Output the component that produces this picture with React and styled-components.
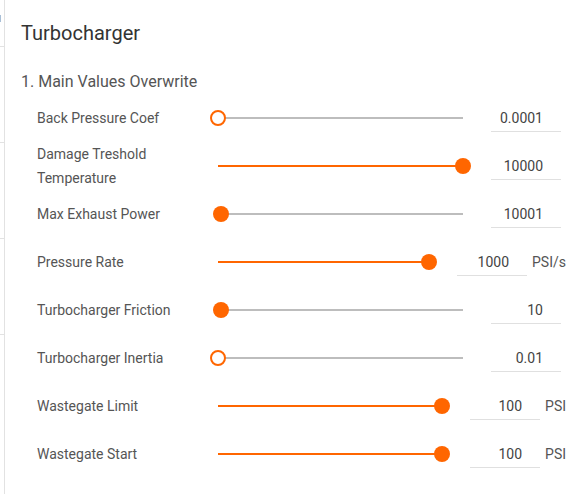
import React from "react";
import styled, { createGlobalStyle } from "styled-components";

const GlobalStyle = createGlobalStyle`
  html, body { margin: 0; padding: 0; background: #ffffff; }
  body { font-family: Roboto, "Liberation Sans", Arial, sans-serif; }
  * { box-sizing: border-box; }
`;

const ORANGE = "#ff6600";

const Page = styled.div`
  display: flex;
  width: 588px;
  height: 494px;
  overflow: hidden;
  background: #fff;
`;

const Strip = styled.div`
  width: 5px;
  flex: none;
  border-right: 1px solid #e2e2e2;
  display: flex;
  flex-direction: column;
`;

const StripCell = styled.div`
  height: ${(p) => p.$h}px;
  flex: none;
  border-bottom: 1px solid #e2e2e2;
  display: flex;
  flex-direction: column;
  padding-top: ${(p) => (p.$mark ? 15 : 0)}px;
`;

const StripMark = styled.div`
  width: 1px;
  height: 7px;
  background: #a9bfd6;
`;

const Panel = styled.div`
  flex: 1;
  min-width: 0;
  padding: 21px 22px 0 16px;
  display: flex;
  flex-direction: column;
`;

const Title = styled.h2`
  margin: 0;
  font-size: 20px;
  line-height: 24px;
  font-weight: 400;
  color: #333;
`;

const SectionTitle = styled.h3`
  margin: 25px 0 0;
  font-size: 16px;
  line-height: 24px;
  font-weight: 400;
  color: #555;
`;

const Rows = styled.div`
  display: flex;
  flex-direction: column;
  padding-left: 16px;
`;

const Row = styled.div`
  display: flex;
  align-items: center;
  min-height: 48px;
`;

const Label = styled.div`
  width: 173px;
  flex: none;
  font-size: 14px;
  line-height: 24px;
  color: #555;
`;

const SliderBox = styled.div`
  flex: 1;
  min-width: 0;
  padding: 0 8px;
  margin-right: 20px;
  height: 20px;
  display: flex;
  align-items: center;
`;

const Track = styled.div`
  position: relative;
  width: 100%;
  height: 2px;
  background: #bdbdbd;
`;

const Fill = styled.div`
  position: absolute;
  left: 0;
  top: 0;
  height: 2px;
  background: ${ORANGE};
`;

const Thumb = styled.div`
  position: absolute;
  top: 1px;
  width: 16px;
  height: 16px;
  margin-left: -8px;
  margin-top: -8px;
  border-radius: 50%;
  background: ${(p) => (p.$empty ? "#fff" : ORANGE)};
  border: ${(p) => (p.$empty ? `2px solid ${ORANGE}` : "none")};
`;

const ValueGroup = styled.div`
  display: flex;
  align-items: center;
  flex: none;
  padding-right: ${(p) => (p.$unit ? 0 : 5)}px;
`;

const ValueInput = styled.input`
  width: 70px;
  height: 28px;
  border: none;
  border-bottom: 1px solid #e0e0e0;
  padding: 0 18px 0 0;
  margin: 0;
  background: transparent;
  text-align: right;
  font-family: Roboto, "Liberation Sans", Arial, sans-serif;
  font-size: 14px;
  color: #444;
  outline: none;
`;

const Unit = styled.span`
  margin-left: 5px;
  font-size: 14px;
  line-height: 24px;
  color: #555;
`;

const rows = [
  { label: "Back Pressure Coef", value: "0.0001", pos: 0 },
  { label: "Damage Treshold Temperature", value: "10000", pos: 1 },
  { label: "Max Exhaust Power", value: "10001", pos: 0.012 },
  { label: "Pressure Rate", value: "1000", pos: 1, unit: "PSI/s" },
  { label: "Turbocharger Friction", value: "10", pos: 0.012 },
  { label: "Turbocharger Inertia", value: "0.01", pos: 0 },
  { label: "Wastegate Limit", value: "100", pos: 1, unit: "PSI" },
  { label: "Wastegate Start", value: "100", pos: 1, unit: "PSI" },
];

function Slider({ pos }) {
  const pct = `${pos * 100}%`;
  return (
    <SliderBox>
      <Track>
        <Fill style={{ width: pct }} />
        <Thumb $empty={pos === 0} style={{ left: pct }} />
      </Track>
    </SliderBox>
  );
}

export default function App() {
  return (
    <>
      <GlobalStyle />
      <Page>
        <Strip>
          <StripCell $h={47} $mark>
            <StripMark />
          </StripCell>
          <StripCell $h={96} />
          <StripCell $h={96} />
          <StripCell $h={96} />
        </Strip>
        <Panel>
          <Title>Turbocharger</Title>
          <SectionTitle>1. Main Values Overwrite</SectionTitle>
          <Rows>
            {rows.map((r) => (
              <Row key={r.label}>
                <Label>{r.label}</Label>
                <Slider pos={r.pos} />
                <ValueGroup $unit={!!r.unit}>
                  <ValueInput readOnly value={r.value} />
                  {r.unit && <Unit>{r.unit}</Unit>}
                </ValueGroup>
              </Row>
            ))}
          </Rows>
        </Panel>
      </Page>
    </>
  );
}
